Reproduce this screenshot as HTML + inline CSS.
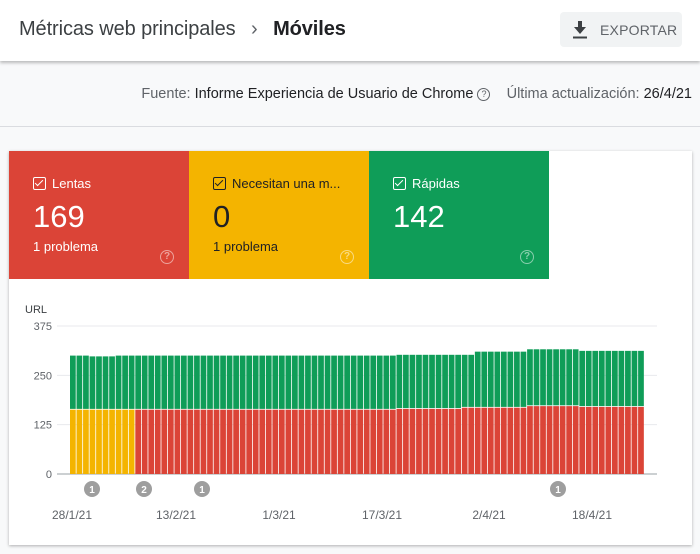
<!DOCTYPE html><html><head><meta charset="utf-8"><style>
body{margin:0;width:700px;height:554px;background:#f8f9fa;font-family:"Liberation Sans",sans-serif;position:relative;overflow:hidden}
.hdr{position:absolute;left:0;top:0;width:700px;height:61px;background:#fff;box-shadow:0 2px 3px rgba(0,0,0,.25)}
.t{position:absolute;left:19px;top:18px;font-size:20px;color:#3c4043;letter-spacing:-0.1px}
.t b{color:#202124;font-weight:bold}
.btn{position:absolute;left:560px;top:12px;width:122px;height:35px;background:#f1f3f4;border-radius:4px}
.btn span{position:absolute;left:40px;top:10px;font-size:14px;color:#5f6368;letter-spacing:.2px}
.src{position:absolute;right:8px;top:86px;font-size:14.5px;color:#5f6368}
.src b{font-weight:normal;color:#202124}
.hr{position:absolute;left:0;top:126px;width:700px;height:1px;background:#dadce0}
.card{position:absolute;left:9px;top:151px;width:683px;height:394px;background:#fff;box-shadow:0 1px 3px rgba(0,0,0,.3)}
.tile{position:absolute;top:0;width:180px;height:128px;color:#fff}
.tile .l{position:absolute;left:24px;top:25px;font-size:13px}
.tile .n{position:absolute;left:24px;top:48px;font-size:31px}
.tile .p{position:absolute;left:24px;top:88px;font-size:13px}
.cb{display:inline-block;width:11px;height:11px;border:1.5px solid currentColor;border-radius:2px;vertical-align:-2px;margin-right:6px;position:relative}
.cb:after{content:"";position:absolute;left:3px;top:0px;width:3px;height:7px;border:solid currentColor;border-width:0 1.5px 1.5px 0;transform:rotate(45deg)}
.q{position:absolute;left:151px;top:99px;width:12px;height:12px;border:1.5px solid currentColor;border-radius:50%;opacity:.5;font-size:10px;text-align:center;line-height:12px;font-weight:bold}
svg text{font-family:"Liberation Sans",sans-serif}
</style></head><body>
<div class="hdr"><div class="t">Métricas web principales <span style="color:#5f6368;margin:0 10px">›</span> <b>Móviles</b></div>
<div class="btn"><svg style="position:absolute;left:12px;top:9px" width="16" height="18" viewBox="0 0 16 18"><path d="M6 0h4v6h4l-6 7-6-7h4z" fill="#3c4043"/><rect x="1" y="15.5" width="14" height="2" fill="#3c4043"/></svg><span>EXPORTAR</span></div></div>
<div class="src">Fuente: <b>Informe Experiencia de Usuario de Chrome</b> <span style="display:inline-block;width:11px;height:11px;border:1px solid #5f6368;border-radius:50%;font-size:9px;text-align:center;line-height:11px;vertical-align:1px">?</span> &nbsp;&nbsp; Última actualización: <b>26/4/21</b></div>
<div class="hr"></div>
<div class="card">
<div class="tile" style="left:0;background:#db4437"><div class="l"><span class="cb"></span>Lentas</div><div class="n">169</div><div class="p">1 problema</div><div class="q">?</div></div>
<div class="tile" style="left:180px;background:#f4b400;color:#202124"><div class="l"><span class="cb"></span>Necesitan una m...</div><div class="n">0</div><div class="p">1 problema</div><div class="q" style="color:#fff">?</div></div>
<div class="tile" style="left:360px;background:#0f9d58"><div class="l"><span class="cb"></span>Rápidas</div><div class="n">142</div><div class="q">?</div></div>
<svg id="ch" style="position:absolute;left:0;top:0" width="683" height="394"></svg>
</div>
<script>
var s='',X0=61,W=6.53,Y0=323,K=148/375;
s+='<text x="16" y="162" font-size="11" fill="#3c4043">URL</text>';
[[375,'375'],[250,'250'],[125,'125'],[0,'0']].forEach(function(a){var y=Y0-a[0]*K;s+='<line x1="48" x2="648" y1="'+y+'" y2="'+y+'" stroke="'+(a[0]?'#e8eaed':'#9aa0a6')+'"/><text x="43" y="'+(y+4)+'" font-size="11" fill="#5f6368" text-anchor="end">'+a[1]+'</text>';});
for(var i=0;i<88;i++){var t=i<50?300:(i<62?302:(i<70?310:(i<78?316:312)));if(i<12&&i>=3&&i<=6)t=298;var r=i<50?165:(i<60?167:(i<70?170:174));if(i>=78)r=172;var x=X0+i*W;var yt=Y0-t*K,yr=Y0-r*K;s+='<rect x="'+x+'" y="'+yt+'" width="'+(W-0.8)+'" height="'+(yr-yt)+'" fill="#0f9d58"/><rect x="'+x+'" y="'+(yr+0.8)+'" width="'+(W-0.8)+'" height="'+(Y0-yr-0.8)+'" fill="'+(i<10?'#f4b400':'#db4437')+'"/>';}
[[83,'1'],[135,'2'],[193,'1'],[549,'1']].forEach(function(a){s+='<circle cx="'+a[0]+'" cy="338" r="8" fill="#9e9e9e"/><text x="'+a[0]+'" y="342" font-size="10" font-weight="bold" fill="#fff" text-anchor="middle">'+a[1]+'</text>';});
[[63,'28/1/21'],[167,'13/2/21'],[270,'1/3/21'],[373,'17/3/21'],[480,'2/4/21'],[583,'18/4/21']].forEach(function(a){s+='<text x="'+a[0]+'" y="368" font-size="12" fill="#5f6368" text-anchor="middle">'+a[1]+'</text>';});
document.getElementById('ch').innerHTML=s;
</script>
</body></html>
